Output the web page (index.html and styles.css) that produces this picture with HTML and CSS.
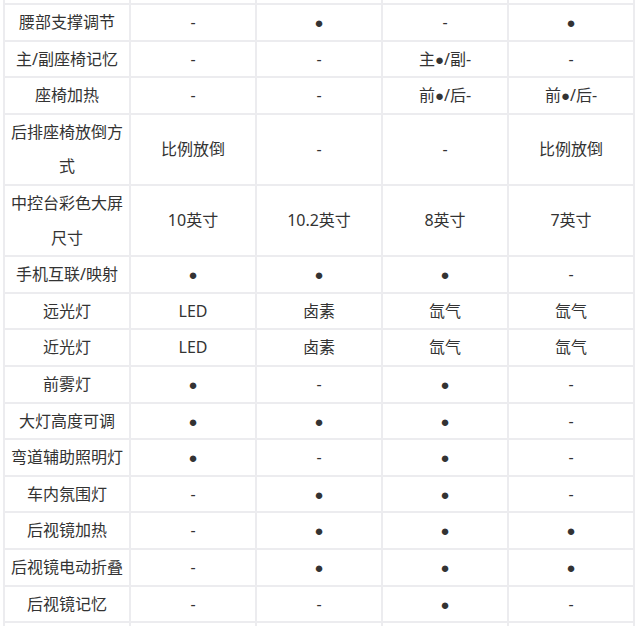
FILE: index.html
```html
<!DOCTYPE html>
<html lang="zh-CN">
<head>
<meta charset="utf-8">
<title>配置对比</title>
<link rel="stylesheet" href="styles.css">
</head>
<body>
<div class="wrap">
<table class="spec">
  <tbody>
    <tr class="hidden-row"><td></td><td></td><td></td><td></td><td></td></tr>
    <tr><td>腰部支撑调节</td><td>-</td><td><span class="dot">●</span></td><td>-</td><td><span class="dot">●</span></td></tr>
    <tr><td>主/副座椅记忆</td><td>-</td><td>-</td><td>主<span class="dot">●</span>/副-</td><td>-</td></tr>
    <tr><td>座椅加热</td><td>-</td><td>-</td><td>前<span class="dot">●</span>/后-</td><td>前<span class="dot">●</span>/后-</td></tr>
    <tr><td>后排座椅放倒方式</td><td>比例放倒</td><td>-</td><td>-</td><td>比例放倒</td></tr>
    <tr><td>中控台彩色大屏尺寸</td><td>10英寸</td><td>10.2英寸</td><td>8英寸</td><td>7英寸</td></tr>
    <tr><td>手机互联/映射</td><td><span class="dot">●</span></td><td><span class="dot">●</span></td><td><span class="dot">●</span></td><td>-</td></tr>
    <tr><td>远光灯</td><td>LED</td><td>卤素</td><td>氙气</td><td>氙气</td></tr>
    <tr><td>近光灯</td><td>LED</td><td>卤素</td><td>氙气</td><td>氙气</td></tr>
    <tr><td>前雾灯</td><td><span class="dot">●</span></td><td>-</td><td><span class="dot">●</span></td><td>-</td></tr>
    <tr><td>大灯高度可调</td><td><span class="dot">●</span></td><td><span class="dot">●</span></td><td><span class="dot">●</span></td><td>-</td></tr>
    <tr><td>弯道辅助照明灯</td><td><span class="dot">●</span></td><td>-</td><td><span class="dot">●</span></td><td>-</td></tr>
    <tr><td>车内氛围灯</td><td>-</td><td><span class="dot">●</span></td><td><span class="dot">●</span></td><td>-</td></tr>
    <tr><td>后视镜加热</td><td>-</td><td><span class="dot">●</span></td><td><span class="dot">●</span></td><td><span class="dot">●</span></td></tr>
    <tr><td>后视镜电动折叠</td><td>-</td><td><span class="dot">●</span></td><td><span class="dot">●</span></td><td><span class="dot">●</span></td></tr>
    <tr><td>后视镜记忆</td><td>-</td><td>-</td><td><span class="dot">●</span></td><td>-</td></tr>
    <tr><td></td><td></td><td></td><td></td><td></td></tr>
  </tbody>
</table>
</div>
</body>
</html>
```
FILE: styles.css
```css
html, body {
  margin: 0;
  padding: 0;
  background: #ffffff;
  overflow: hidden;
}

.wrap {
  padding-left: 3px;
}

.spec {
  margin-top: -33.6px;
  width: 632px;
  table-layout: fixed;
  border-collapse: separate;
  border-spacing: 0;
  border-top: 2px solid #ececef;
  border-left: 2px solid #ececef;
  font-family: "Noto Sans", "Noto Sans CJK SC", sans-serif;
  font-size: 16px;
  color: #333333;
}

.spec td {
  border-right: 2px solid #ececef;
  border-bottom: 2px solid #ececef;
  padding: 0 6px;
  height: 34.6px;
  line-height: 34.6px;
  text-align: center;
  vertical-align: middle;
  word-break: break-all;
}

.dot {
  font-family: "Liberation Sans", sans-serif;
  font-size: 15px;
  line-height: 1;
}
```
